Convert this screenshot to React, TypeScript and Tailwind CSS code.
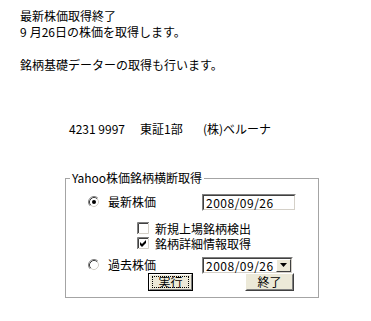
import React from "react";

function Radio({ checked }: { checked?: boolean }) {
  return (
    <svg width="12" height="12" viewBox="0 0 12 12" className="shrink-0">
      <circle cx="6" cy="6" r="4.5" fill="#ffffff" />
      <path d="M2.11 9.89 A5.5 5.5 0 0 1 9.89 2.11" stroke="#808080" strokeWidth="1" fill="none" />
      <path d="M9.89 2.11 A5.5 5.5 0 0 1 2.11 9.89" stroke="#ffffff" strokeWidth="1" fill="none" />
      <path d="M2.82 9.18 A4.5 4.5 0 0 1 9.18 2.82" stroke="#404040" strokeWidth="1" fill="none" />
      <path d="M9.18 2.82 A4.5 4.5 0 0 1 2.82 9.18" stroke="#d4d0c8" strokeWidth="1" fill="none" />
      {checked && <circle cx="6" cy="6" r="2" fill="#000000" />}
    </svg>
  );
}

function Check({ checked }: { checked?: boolean }) {
  return (
    <svg width="13" height="13" viewBox="0 0 13 13" className="shrink-0">
      <rect x="2" y="2" width="9" height="9" fill="#ffffff" />
      <path d="M0.5 12 V0.5 H12" stroke="#808080" fill="none" />
      <path d="M1.5 11 V1.5 H11" stroke="#404040" fill="none" />
      <path d="M0.5 12.5 H12.5 V0.5" stroke="#ffffff" fill="none" />
      <path d="M1.5 11.5 H11.5 V1.5" stroke="#d4d0c8" fill="none" />
      {checked && <path d="M3 5 L5 7 L9 3 L9 6 L5 10 L3 8 Z" fill="#000000" />}
    </svg>
  );
}

function Sunken({ className, children }: { className: string; children: React.ReactNode }) {
  return (
    <div className={"border border-t-[#808080] border-l-[#808080] border-r-white border-b-white " + className}>
      <div className="h-full border border-t-[#404040] border-l-[#404040] border-r-[#d4d0c8] border-b-[#d4d0c8] bg-white flex items-center">
        {children}
      </div>
    </div>
  );
}

export default function App() {
  return (
    <div className="w-[371px] h-[321px] bg-white text-black text-[12px] leading-[16px] font-['Noto_Sans_CJK_JP',sans-serif] overflow-hidden">
      <div className="pt-[8px] pl-[20px]">
        <div>最新株価取得終了</div>
        <div>
          <span className="mr-[3px]">9</span>月26日の株価を取得します。
        </div>
        <div className="mt-[17px]">銘柄基礎データーの取得も行います。</div>
      </div>

      <div className="mt-[48px] pl-[69px] flex">
        <span className="w-[71px]">4231 9997</span>
        <span className="w-[63px]">東証1部</span>
        <span>(株)ベルーナ</span>
      </div>

      <fieldset className="ml-[65px] mt-[33px] w-[254px] border border-[#a4a4a4] pb-[6px]">
        <legend className="ml-[4px] px-[2px] leading-[16px]">Yahoo株価銘柄横断取得</legend>

        <div className="mt-[8px] h-[16px] flex items-center pl-[22px]">
          <Radio checked />
          <span className="ml-[8px] w-[94px]">最新株価</span>
          <Sunken className="w-[94px] h-[17px]">
            <span className="pl-[2px] text-[12px] leading-[13px] tracking-[0.5px]">2008/09/26</span>
          </Sunken>
        </div>

        <div className="mt-[11px] h-[15px] leading-[15px] flex items-center pl-[71px]">
          <Check />
          <span className="ml-[5px]">新規上場銘柄検出</span>
        </div>
        <div className="h-[15px] leading-[15px] flex items-center pl-[71px]">
          <Check checked />
          <span className="ml-[5px]">銘柄詳細情報取得</span>
        </div>

        <div className="mt-[6px] h-[16px] flex items-center pl-[22px]">
          <Radio />
          <span className="ml-[8px] w-[94px]">過去株価</span>
          <Sunken className="w-[91px] h-[17px]">
            <span className="pl-[2px] flex-1 leading-[13px] tracking-[0.5px]">2008/09/26</span>
            <div className="w-[15px] h-[13px] bg-[#ece9d8] border border-t-white border-l-white border-r-[#404040] border-b-[#404040] flex items-center justify-center">
              <svg width="7" height="4" viewBox="0 0 7 4">
                <path d="M0 0 H7 L3.5 4 Z" fill="#000000" />
              </svg>
            </div>
          </Sunken>
        </div>

        <div className="mt-0 h-[18px] flex pl-[82px]">
          <div className="w-[45px] h-[18px] border border-black">
            <div className="h-full border border-t-white border-l-white border-r-[#808080] border-b-[#808080] bg-[#ece9d8] flex items-center justify-center">
              <span className="w-[37px] h-[12px] border border-dotted border-black flex items-center justify-center leading-[12px]">実行</span>
            </div>
          </div>
          <div className="ml-[52px] w-[49px] h-[18px] border border-t-white border-l-white border-r-[#404040] border-b-[#404040]">
            <div className="h-full border border-t-[#ece9d8] border-l-[#ece9d8] border-r-[#808080] border-b-[#808080] bg-[#ece9d8] flex items-center justify-center">
              <span className="leading-[14px]">終了</span>
            </div>
          </div>
        </div>
      </fieldset>
    </div>
  );
}
